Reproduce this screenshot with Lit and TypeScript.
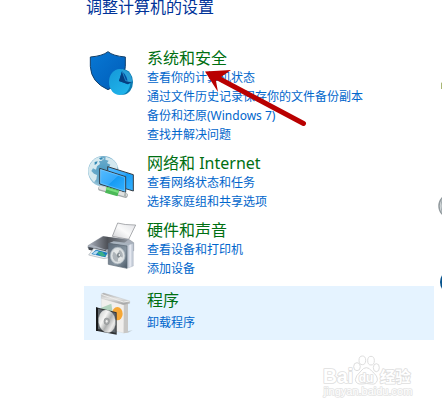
import { LitElement, html, css, svg, TemplateResult } from "lit";
import { customElement } from "lit/decorators.js";

interface Category {
  title: string;
  links: string[];
  icon: TemplateResult;
  active?: boolean;
}

const shieldIcon = html`<svg class="icon" viewBox="12 144 162 150" aria-hidden="true">
  <defs>
    <linearGradient id="sh" x1="0" y1="0" x2="1" y2="1"><stop offset="0" stop-color="#0878d4" /><stop offset="1" stop-color="#005cb8" /></linearGradient>
    <linearGradient id="pie" x1="0" y1="0" x2="0.7" y2="1"><stop offset="0" stop-color="#1598d8" /><stop offset="1" stop-color="#20b4ea" /></linearGradient>
  </defs>
  <path d="M84 155Q99 168 136 171V199Q135 247 84 269Q33 247 31 199V171Q68 168 84 155Z" fill="url(#sh)" stroke="#123f69" stroke-width="3" />
  <ellipse cx="129" cy="246" rx="30" ry="38" fill="#0b7cb2" />
  <ellipse cx="119" cy="246" rx="32" ry="39" fill="url(#pie)" />
  <path d="M126 208Q153 212 157 243L144 252Q143 224 126 213Z" fill="#2a9fd6" />
  <path d="M126 214L117 243L144 253Q143 228 126 214Z" fill="#004c9e" />
  <path d="M126 214L137 243L157 246L144 253L117 243Z" fill="#063f80" />
  <path d="M127 215L137 242L156 246" fill="none" stroke="#35a8dc" stroke-width="2" />
</svg>`;

const networkIcon = html`<svg class="icon" viewBox="12 24 162 150" aria-hidden="true">
  <defs>
    <radialGradient id="gl" cx="0.5" cy="0.45" r="0.6"><stop offset="0" stop-color="#4d9cc4" /><stop offset="0.7" stop-color="#70adcb" /><stop offset="1" stop-color="#b3d4e2" /></radialGradient>
    <linearGradient id="scr" x1="0" y1="0" x2="1" y2="1"><stop offset="0" stop-color="#58bdff" /><stop offset="0.5" stop-color="#35a9fa" /><stop offset="0.52" stop-color="#169bf4" /><stop offset="1" stop-color="#36b1ff" /></linearGradient>
  </defs>
  <circle cx="70" cy="79" r="46" fill="url(#gl)" />
  <path d="M31 57Q42 38 61 35L73 41L64 48L57 48L60 57L51 64L48 74L39 70L34 78L42 86L51 90L49 103L42 112Q22 92 25 73Z" fill="#e1eff3" opacity="0.9" />
  <path d="M77 35Q102 40 113 62L111 75L99 69L94 76L86 68L91 59L81 54L86 47L76 44Z" fill="#e0eef3" opacity="0.9" />
  <path d="M57 39L66 37L69 43L61 44ZM44 51L53 49L50 56L44 60Z" fill="#3489b4" />
  <path d="M83 65L160 89V138L84 115Z" fill="url(#scr)" stroke="#353c43" stroke-width="3" />
  <path d="M59 70L137 95V142L59 117Z" fill="url(#scr)" stroke="#343d46" stroke-width="3" />
  <path d="M62 74L134 97V138L62 114Z" fill="none" stroke="#8bd3ff" stroke-width="1.5" />
  <path d="M62 130L136 151" stroke="#a4a9aa" stroke-width="15" stroke-linecap="round" />
  <path d="M62 128L136 149" stroke="#dfe2e1" stroke-width="11" stroke-linecap="round" />
  <path d="M78 134L115 145" stroke="#4bb957" stroke-width="19" />
  <path d="M78 130L115 141" stroke="#79df7e" stroke-width="6" />
  <path d="M134 143L140 145L137 156L131 154Z" fill="#afb5b3" />
</svg>`;

const printerIcon = html`<svg class="icon" viewBox="12 24 162 150" aria-hidden="true">
  <defs>
    <linearGradient id="pap" x1="1" y1="0" x2="0" y2="1"><stop offset="0" stop-color="#e0e1e5" /><stop offset="0.5" stop-color="#fafafa" /><stop offset="1" stop-color="#d0d1d5" /></linearGradient>
    <linearGradient id="top" x1="0" y1="0" x2="1" y2="0"><stop offset="0" stop-color="#a1a7b3" /><stop offset="0.45" stop-color="#4e5157" /><stop offset="1" stop-color="#8b929b" /></linearGradient>
    <linearGradient id="box" x1="0" y1="0" x2="1" y2="1"><stop offset="0" stop-color="#5b6876" /><stop offset="0.6" stop-color="#8795a1" /><stop offset="1" stop-color="#4a5967" /></linearGradient>
  </defs>
  <path d="M113 33Q132 39 167 39L146 82L97 73Z" fill="url(#pap)" stroke="#83868b" stroke-width="2" />
  <path d="M24 101L67 74L148 83L161 92V116L120 128L75 123L24 108Z" fill="#a9b0bb" stroke="#7d848f" stroke-width="1.5" />
  <path d="M31 97L70 73L145 83L117 105L77 113Z" fill="url(#top)" />
  <path d="M25 105L78 115V127L26 113Z" fill="#3f444c" />
  <path d="M41 109L82 119L86 137L72 140L26 129Z" fill="#eef1f2" stroke="#8b949d" stroke-width="1.5" />
  <path d="M48 113L83 122L76 136L34 126Z" fill="#1c7cbf" />
  <path d="M49 121L66 119L78 132L64 133Z" fill="#3aaf86" />
  <path d="M37 124L49 116L56 118L47 128Z" fill="#b1d8f2" />
  <path d="M86 94L101 88L160 95L141 102Z" fill="#a9b4bf" />
  <path d="M140 101L160 94V162L141 169Z" fill="#c5cdd8" stroke="#9aa5b1" />
  <path d="M148 99L154 97V163L148 166Z" fill="#e4e8f0" />
  <path d="M85 94L141 102V169L85 157Z" fill="url(#box)" stroke="#596673" stroke-width="2" />
  <ellipse cx="113" cy="131" rx="22" ry="25" fill="#d4dadd" stroke="#aeb8c0" stroke-width="2" />
  <ellipse cx="113" cy="131" rx="17" ry="20" fill="#adb4b9" stroke="#f2f3f3" stroke-width="2" />
  <path d="M111 129L100 117Q109 109 119 113ZM116 132L129 137Q124 149 113 149Z" fill="#e5e8e8" />
  <ellipse cx="116" cy="130" rx="5" ry="7" fill="#7e878c" />
  <ellipse cx="118" cy="129" rx="2" ry="4" fill="#f0f1f1" />
</svg>`;

const programIcon = html`<svg class="icon" viewBox="12 30 162 150" aria-hidden="true">
  <defs>
    <linearGradient id="flap" x1="0" y1="0" x2="0" y2="1"><stop offset="0" stop-color="#a9a9a9" /><stop offset="0.5" stop-color="#e5e5e4" /><stop offset="1" stop-color="#9a9a9a" /></linearGradient>
    <linearGradient id="cd" x1="0" y1="0" x2="1" y2="1"><stop offset="0" stop-color="#bfc1c1" /><stop offset="0.35" stop-color="#f6f6f5" /><stop offset="0.55" stop-color="#aeb0b0" /><stop offset="0.75" stop-color="#ecebea" /><stop offset="1" stop-color="#a5a5a5" /></linearGradient>
  </defs>
  <path d="M64 53L132 73V159L64 145Z" fill="#f1efed" stroke="#c9cbcb" />
  <path d="M132 71L144 69V158L131 160Z" fill="#c8c7c5" />
  <path d="M144 158L158 151L144 153Z" fill="#c2ccd3" />
  <path d="M64 83L94 71L108 162L64 140Z" fill="#b1d2bd" />
  <ellipse cx="112" cy="101" rx="16" ry="20" fill="#f6a735" />
  <path d="M64 42L71 39L149 63V70L130 74L64 55Z" fill="url(#flap)" stroke="#b6b6b6" />
  <path d="M64 43L130 66L149 63" fill="none" stroke="#ededec" stroke-width="3" />
  <path d="M48 82L110 97V164L48 152Z" fill="#303234" />
  <path d="M54 86L107 99V158L54 147Z" fill="#60666b" />
  <ellipse cx="81" cy="124" rx="25" ry="34" fill="url(#cd)" stroke="#d8dadb" transform="rotate(-8 81 124)" />
  <ellipse cx="80" cy="124" rx="8" ry="10" fill="#a8aaab" stroke="#828689" stroke-width="1.5" />
  <ellipse cx="80" cy="124" rx="3" ry="4" fill="#f0f0ef" />
  <path d="M48 82L54 84V153L48 152Z" fill="#17191b" />
</svg>`;

const categories: Category[] = [
  {
    title: "系统和安全",
    links: ["查看你的计算机状态", "通过文件历史记录保存你的文件备份副本", "备份和还原(Windows 7)", "查找并解决问题"],
    icon: shieldIcon,
  },
  { title: "网络和 Internet", links: ["查看网络状态和任务", "选择家庭组和共享选项"], icon: networkIcon },
  { title: "硬件和声音", links: ["查看设备和打印机", "添加设备"], icon: printerIcon },
  { title: "程序", links: ["卸载程序"], icon: programIcon, active: true },
];

const toes = [
  [147, 80, 10, 12],
  [163, 61, 10, 13],
  [189, 62, 10, 13],
  [205, 83, 9, 12],
];

@customElement("app-root")
export class AppRoot extends LitElement {
  static styles = css`
    :host {
      display: block;
      position: relative;
      min-height: 100vh;
      overflow: hidden;
      background: #fff;
      font-family: "Noto Sans", "Noto Sans CJK SC", sans-serif;
    }
    .page-title {
      margin: 0 0 33px 86px;
      font-size: 16px;
      line-height: 15px;
      font-weight: 400;
      color: #039;
    }
    .panel {
      display: flex;
      gap: 4px;
      padding-left: 84px;
    }
    .column {
      flex: 1;
      min-width: 0;
      display: flex;
      flex-direction: column;
      gap: 9px;
    }
    .category {
      display: flex;
      align-items: flex-start;
      gap: 9px;
    }
    .active {
      margin-top: -1px;
      padding: 4px 0 0;
      min-height: 50px;
      background: #e5f3ff;
    }
    .active .links {
      margin-top: 3px;
    }
    .icon {
      flex: none;
      display: block;
      width: 54px;
      height: 50px;
    }
    .heading {
      margin: 0;
      font-size: 16px;
      line-height: 20px;
      font-weight: 400;
    }
    .links {
      margin: 0;
      padding: 0;
      list-style: none;
      font-size: 12px;
      line-height: 19px;
    }
    .links li {
      height: 19px;
      white-space: nowrap;
    }
    a {
      color: #06c;
      text-decoration: none;
    }
    .heading a {
      color: #006f12;
    }
    .next {
      flex: none;
      width: 4px;
      height: 260px;
      overflow: hidden;
    }
    .next svg {
      display: block;
    }
    .arrow {
      position: absolute;
      left: 200px;
      top: 65px;
      pointer-events: none;
    }
    .watermark {
      position: absolute;
      right: 20px;
      top: 350px;
      pointer-events: none;
    }
    .watermark text {
      font-family: "Liberation Sans", "Noto Sans CJK SC", sans-serif;
      font-weight: 700;
      fill: #fff;
      stroke: #dedede;
      stroke-width: 5px;
      stroke-linejoin: round;
      paint-order: stroke;
    }
    .watermark .site {
      font-weight: 400;
      stroke: #e4e4e4;
    }
  `;

  render() {
    return html`
      <h1 class="page-title">调整计算机的设置</h1>
      <main class="panel">
        <div class="column">
          ${categories.map(
            (c) => html`<section class="category ${c.active ? "active" : ""}">
              ${c.icon}
              <div>
                <h2 class="heading"><a href="#">${c.title}</a></h2>
                <ul class="links">
                  ${c.links.map((l) => html`<li><a href="#">${l}</a></li>`)}
                </ul>
              </div>
            </section>`
          )}
        </div>
        <div class="next">
          <svg width="54" height="260" viewBox="438 48 54 260" aria-hidden="true">
            <path d="M441 83L444 81V89H441Z" fill="#a9b776" />
            <ellipse cx="449" cy="206" rx="10" ry="11" fill="#e1e5e6" stroke="#929a9e" stroke-width="1.5" />
            <path d="M442 199Q440 206 442 213" fill="none" stroke="#a4adb1" />
            <circle cx="452" cy="282" r="12" fill="#07538d" />
          </svg>
        </div>
      </main>

      <svg class="arrow" width="110" height="64" viewBox="200 65 110 64" aria-hidden="true">
        <path d="M205 71.500L231 70L221 77L216 81L218 92Z" fill="#b90000" />
        <path d="M216 77L303.500 123.500" stroke="#b90000" stroke-width="5" stroke-linecap="round" />
      </svg>

      <svg class="watermark" width="102" height="54" viewBox="0 30 306 162" role="img" aria-label="Baidu 经验">
        <g transform="translate(-36 0)">
          <text x="45" y="130" font-size="58">Bai</text>
          ${toes.map(
            ([x, y, rx, ry]) => svg`<ellipse cx=${x} cy=${y} rx=${rx} ry=${ry} fill="#fff" stroke="#dedede" stroke-width="3" />`
          )}
          <path d="M175 83Q184 83 191 93Q210 108 208 121Q203 135 190 132Q176 129 162 132Q144 134 142 119Q142 108 159 93Q166 83 175 83Z" fill="#fff" stroke="#dedede" stroke-width="3" />
          <text x="152" y="125" font-size="36">du</text>
          <text x="216" y="127" font-size="46">经验</text>
          <text class="site" x="47" y="165" font-size="33">jingyan.baidu.com</text>
        </g>
      </svg>
    `;
  }
}
